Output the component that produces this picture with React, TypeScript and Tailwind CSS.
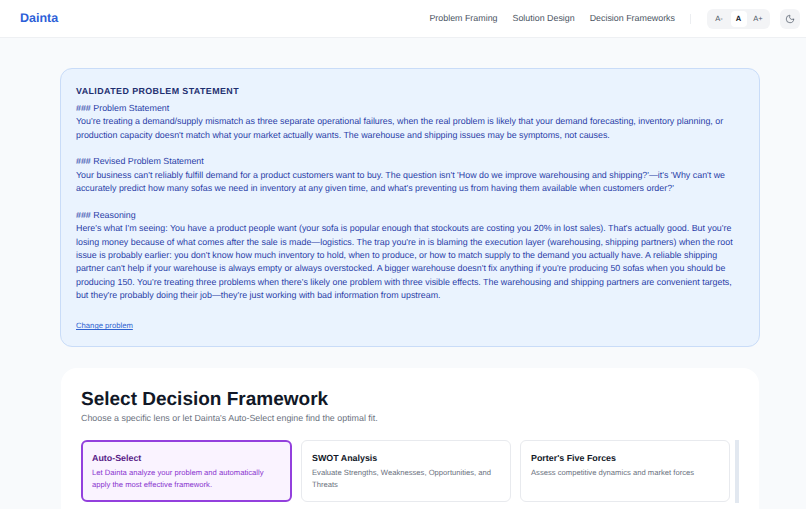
import { Moon } from "lucide-react";

const frameworks = [
  { t: "SWOT Analysis", d: "Evaluate Strengths, Weaknesses, Opportunities, and Threats" },
  { t: "Porter's Five Forces", d: "Assess competitive dynamics and market forces" },
];

export default function App() {
  return (
    <div className="h-[509px] w-[806px] overflow-hidden bg-[#f8fafc] font-['Liberation_Sans',Arial,sans-serif] [text-rendering:geometricPrecision]">
      <header className="flex h-[38px] items-center justify-between border-b border-[#eef0f3] bg-white pl-5 pr-[6px]">
        <span className="text-[12.5px] font-bold text-[#2c5fd8]">Dainta</span>
        <div className="flex items-center">
          <nav className="flex gap-[15px] text-[8.9px] text-[#4b5563]">
            <span>Problem Framing</span>
            <span>Solution Design</span>
            <span>Decision Frameworks</span>
          </nav>
          <div className="ml-[15px] h-[10px] w-px bg-[#eceef1]" />
          <div className="ml-4 flex h-5 items-center gap-[3.5px] rounded-md bg-[#f3f4f6] px-[4px] text-[7.5px] text-[#4b5563]">
            <span className="flex h-4 w-4 items-center justify-center">A-</span>
            <span className="flex h-4 w-4 items-center justify-center rounded bg-white font-bold text-[#111827]">A</span>
            <span className="flex h-4 w-4 items-center justify-center">A+</span>
          </div>
          <div className="ml-[10px] flex h-5 w-5 items-center justify-center rounded-md bg-[#f3f4f6] text-[#374151]">
            <Moon size={10} strokeWidth={1.5} />
          </div>
        </div>
      </header>
      <main className="pl-[60px] pr-[46px] pt-[30px]">
        <section className="h-[279px] rounded-[12px] border border-[#c9dcf8] bg-[#eaf3fe] px-[15px] pt-[16px]">
          <h2 className="text-[8.9px] font-bold leading-[13px] tracking-[0.42px] text-[#1e2f70]">VALIDATED PROBLEM STATEMENT</h2>
          <div className="mt-[4px] whitespace-pre-line text-[8.88px] leading-[13.36px] text-[#2a3fa8]">
            {`### Problem Statement
You're treating a demand/supply mismatch as three separate operational failures, when the real problem is likely that your demand forecasting, inventory planning, or production capacity doesn't match what your market actually wants. The warehouse and shipping issues may be symptoms, not causes.

### Revised Problem Statement
Your business can't reliably fulfill demand for a product customers want to buy. The question isn't 'How do we improve warehousing and shipping?'—it's 'Why can't we accurately predict how many sofas we need in inventory at any given time, and what's preventing us from having them available when customers order?'

### Reasoning
Here's what I'm seeing: You have a product people want (your sofa is popular enough that stockouts are costing you 20% in lost sales). That's actually good. But you're losing money because of what comes after the sale is made—logistics. The trap you're in is blaming the execution layer (warehousing, shipping partners) when the root issue is probably earlier: you don't know how much inventory to hold, when to produce, or how to match supply to the demand you actually have. A reliable shipping partner can't help if your warehouse is always empty or always overstocked. A bigger warehouse doesn't fix anything if you're producing 50 sofas when you should be producing 150. You're treating three problems when there's likely one problem with three visible effects. The warehousing and shipping partners are convenient targets, but they're probably doing their job—they're just working with bad information from upstream.`}
          </div>
          <a className="mt-[19px] block text-[7.7px] leading-[10px] text-[#2f62d0] underline">Change problem</a>
        </section>
        <section className="mx-px mt-[21px] h-[200px] rounded-t-[16px] bg-white pl-5 pr-5 pt-[20px]">
          <h1 className="text-[19px] font-bold leading-[24px] text-[#111827]">Select Decision Framework</h1>
          <p className="text-[8.9px] leading-[12px] text-[#6b7280]">Choose a specific lens or let Dainta's Auto-Select engine find the optimal fit.</p>
          <div className="mt-[16px] flex h-[63px]">
            <div className="flex h-[62px] flex-1 gap-[9px]">
              <div className="w-[211px] flex-none rounded-[6px] border-2 border-[#9340dd] bg-[#faf3ff] px-[9px] pt-[9px]">
                <div className="text-[8.9px] font-bold leading-[14px] text-[#581c87]">Auto-Select</div>
                <div className="mt-[2px] text-[7.65px] leading-[12px] text-[#8a35cf]">Let Dainta analyze your problem and automatically apply the most effective framework.</div>
              </div>
              {frameworks.map((f) => (
                <div key={f.t} className="flex-1 rounded-[6px] border border-[#e8eaee] bg-white px-[10px] pt-[10px]">
                  <div className="text-[8.9px] font-bold leading-[14px] text-[#111827]">{f.t}</div>
                  <div className="mt-[2px] text-[7.65px] leading-[12px] text-[#6b7280]">{f.d}</div>
                </div>
              ))}
            </div>
            <div className="ml-[5px] h-[63px] w-1 bg-[#e2e8f0]" />
          </div>
        </section>
      </main>
    </div>
  );
}
